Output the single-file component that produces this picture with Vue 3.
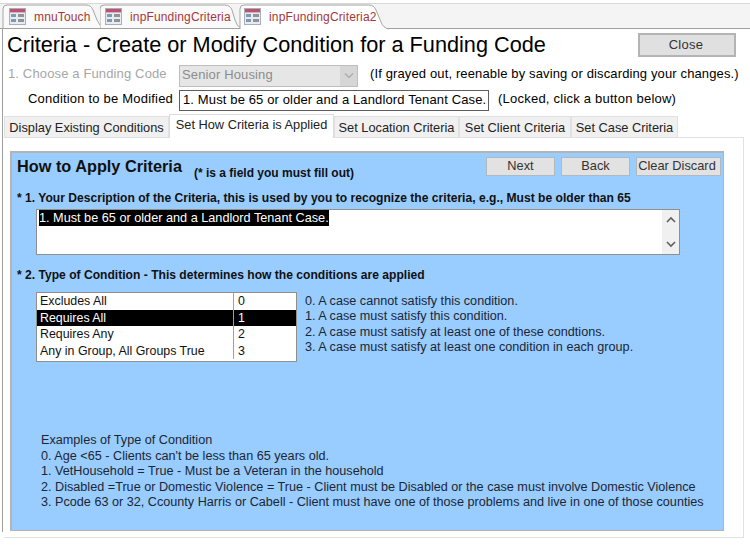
<script setup>
const docTabs = [
  { name: 'mnuTouch', w: 98, d: 'M1 28V9Q1 5 5 5H84Q89 5 91 10L95 20Q98 27 102 28', active: false },
  { name: 'inpFundingCriteria', w: 139, d: 'M0 28V9Q0 5 4 5H125Q130 5 132 10L135 20Q137 27 141 28', active: false },
  { name: 'inpFundingCriteria2', w: 150, d: 'M1 29V9Q1 5 5 5H130Q135 5 137 10L142 22Q144 28 150 29', active: true },
]
const pageTabs = [
  { name: 'Display Existing Conditions', w: 165 },
  { name: 'Set How Criteria is Applied', w: 165, active: true },
  { name: 'Set Location Criteria', w: 125 },
  { name: 'Set Client Criteria', w: 112 },
  { name: 'Set Case Criteria', w: 107 },
]
const rows = [
  { label: 'Excludes All', v: 0 },
  { label: 'Requires All', v: 1, selected: true },
  { label: 'Requires Any', v: 2 },
  { label: 'Any in Group, All Groups True', v: 3 },
]
const legend = [
  '0. A case cannot satisfy this condition.',
  '1. A case must satisfy this condition.',
  '2. A case must satisfy at least one of these condtions.',
  '3. A case must satisfy at least one condition in each group.',
]
const examples = [
  'Examples of Type of Condition',
  "0. Age <65 - Clients can't be less than 65 years old.",
  '1. VetHousehold = True - Must be a Veteran in the household',
  '2. Disabled =True or Domestic Violence = True - Client must be Disabled or the case must involve Domestic Violence',
  '3. Pcode 63 or 32, Ccounty Harris or Cabell - Client must have one of those problems and live in one of those counties',
]
</script>

<template>
  <div class="app">
    <div class="doc-strip">
      <div
        v-for="t in docTabs"
        :key="t.name"
        class="doc-tab"
        :class="{ active: t.active }"
        :style="{ width: t.w + 'px' }"
      >
        <svg class="tab-shape" :width="t.w + 4" height="30" :viewBox="`0 0 ${t.w + 4} 30`">
          <path :d="t.d" :fill="t.active ? '#fff' : '#fafafa'" stroke="#a6a6a6" />
        </svg>
        <svg class="form-icon" width="17" height="17" viewBox="0 0 17 17">
          <rect x="0.5" y="0.5" width="16" height="16" fill="#e8ecf0" stroke="#a9afb8" />
          <rect x="1" y="1" width="15" height="3.4" fill="#b9536f" />
          <rect x="2" y="6" width="5" height="3" fill="#7f99b3" />
          <rect x="2" y="11" width="5" height="3" fill="#7f99b3" />
          <rect x="9" y="6" width="6" height="3" fill="#8d939a" />
          <rect x="9" y="11" width="6" height="3" fill="#8d939a" />
        </svg>
        <span class="doc-name">{{ t.name }}</span>
      </div>
    </div>

    <div class="form">
      <div class="title-row">
        <h1>Criteria - Create or Modify Condition for a Funding Code</h1>
        <button class="btn close">Close</button>
      </div>

      <div class="field-row first">
        <span class="lbl disabled">1. Choose a Funding Code</span>
        <div class="combo">
          <span class="combo-text">Senior Housing</span>
          <span class="combo-btn">
            <svg width="12" height="8" viewBox="0 0 12 8"><path d="M2 1.5 6 5.5 10 1.5" fill="none" stroke="#a8a8a8" stroke-width="1.2" /></svg>
          </span>
        </div>
        <span class="note">(If grayed out, reenable by saving or discarding your changes.)</span>
      </div>

      <div class="field-row second">
        <span class="lbl cond">Condition to be Modified</span>
        <div class="locked">1. Must be 65 or older and a Landlord Tenant Case.</div>
        <span class="note n2">(Locked, click a button below)</span>
      </div>

      <div class="page-tabs">
        <div
          v-for="t in pageTabs"
          :key="t.name"
          class="page-tab"
          :class="{ active: t.active }"
          :style="{ width: t.w + 'px' }"
        >{{ t.name }}</div>
      </div>

      <div class="tab-page">
        <section class="panel">
          <header class="panel-head">
            <h2>How to Apply Criteria</h2>
            <span class="req">(* is a field you must fill out)</span>
            <div class="actions">
              <button class="btn small nav">Next</button>
              <button class="btn small nav">Back</button>
              <button class="btn small clear">Clear Discard</button>
            </div>
          </header>

          <p class="q q1">* 1. Your Description of the Criteria, this is used by you to recognize the criteria, e.g., Must be older than 65</p>
          <div class="memo">
            <div class="memo-text"><span class="sel">1. Must be 65 or older and a Landlord Tenant Case.</span></div>
            <div class="scroll">
              <svg width="12" height="8" viewBox="0 0 12 8"><path d="M2 6 6 2 10 6" fill="none" stroke="#606060" stroke-width="1.6" /></svg>
              <svg width="12" height="8" viewBox="0 0 12 8"><path d="M2 2 6 6 10 2" fill="none" stroke="#606060" stroke-width="1.6" /></svg>
            </div>
          </div>

          <p class="q q2">* 2. Type of Condition - This determines how the conditions are applied</p>
          <div class="cond-row">
            <div class="listbox">
              <div v-for="r in rows" :key="r.v" class="list-row" :class="{ selected: r.selected }">
                <span class="c1">{{ r.label }}</span>
                <span class="c2">{{ r.v }}</span>
              </div>
            </div>
            <div class="legend">
              <div v-for="l in legend" :key="l">{{ l }}</div>
            </div>
          </div>

          <div class="examples">
            <div v-for="e in examples" :key="e">{{ e }}</div>
          </div>
        </section>
      </div>
    </div>
  </div>
</template>

<style scoped>
.app {
  width: 750px;
  height: 546px;
  overflow: hidden;
  background: #fff;
  font-family: "Liberation Sans", Arial, sans-serif;
  color: #000;
  box-sizing: border-box;
  padding-top: 3px;
}
.doc-strip {
  height: 26px;
  box-sizing: border-box;
  display: flex;
  padding-left: 2px;
  background: #f4f4f4;
  border-top: 1px solid #d8d8d8;
  border-bottom: 1px solid #a0a0a0;
}
.doc-tab {
  position: relative;
  height: 24px;
  display: flex;
  align-items: center;
  padding-left: 5px;
  box-sizing: border-box;
  font-size: 12px;
  color: #a4373a;
}
.doc-tab:first-child { padding-left: 7px; }
.tab-shape {
  position: absolute;
  left: 0;
  top: -4px;
}
.doc-tab.active { z-index: 2; }
.form-icon { position: relative; flex: none; }
.doc-name {
  position: relative;
  margin-left: 8px;
  padding-top: 2px;
  letter-spacing: 0.15px;
}

.form {
  margin-left: 2px;
  border-left: 1px solid #a0a0a0;
  height: 503px;
  padding-left: 1px;
  box-sizing: border-box;
}
.title-row {
  display: flex;
  height: 35px;
  box-sizing: border-box;
  padding: 2px 0 0 3px;
}
h1 {
  margin: 0;
  font-size: 21.7px;
  line-height: 28px;
  font-weight: 400;
  white-space: nowrap;
  width: 631px;
}
.btn {
  font: inherit;
  color: #333;
  background: #e0e0e0;
  border: 2px solid #b4b4b4;
  box-sizing: border-box;
  padding: 0;
}
.close {
  width: 98px;
  height: 24px;
  font-size: 13px;
  margin-top: 2px;
  padding: 0 2px 2px 0;
  letter-spacing: 0.3px;
}
.field-row {
  display: flex;
  align-items: center;
  font-size: 13px;
  white-space: nowrap;
}
.first { height: 22px; margin-top: 1px; }
.second { height: 21px; margin-top: 3px; }
.lbl { display: block; width: 175px; box-sizing: border-box; }
.first .lbl, .first .note { margin-bottom: 5px; }
.second .lbl, .second .note { margin-bottom: 4px; }
.disabled { color: #a6a6a6; padding-left: 4px; letter-spacing: 0.14px; }
.cond { padding-left: 24px; letter-spacing: 0.2px; }
.combo {
  width: 179px;
  height: 22px;
  box-sizing: border-box;
  background: #e6e6e6;
  border: 1px solid #bdbdbd;
  color: #8c8c8c;
  display: flex;
  align-items: center;
  justify-content: space-between;
  padding-left: 2px;
  letter-spacing: 0.14px;
}
.combo-text { margin-bottom: 3px; }
.combo-btn {
  width: 17px;
  height: 20px;
  background: #d6d6d6;
  display: flex;
  align-items: center;
  justify-content: center;
}
.note { margin-left: 12px; letter-spacing: 0.13px; }
.n2 { margin-left: 9px; letter-spacing: 0.23px; }
.locked {
  width: 310px;
  height: 21px;
  line-height: 17px;
  box-sizing: border-box;
  border: 1px solid #5e5e5e;
  padding-left: 3px;
  letter-spacing: 0.13px;
}
.page-tabs {
  display: flex;
  align-items: flex-end;
  height: 23px;
  margin-top: 3px;
  font-size: 12.8px;
}
.page-tab {
  height: 21px;
  line-height: 21px;
  box-sizing: border-box;
  text-align: center;
  background: #f0f0f0;
  border: 1px solid #e1e1e1;
  border-bottom: 0;
  white-space: nowrap;
  color: #222;
}
.page-tab.active {
  height: 24px;
  line-height: 20px;
  background: #fff;
  border-color: #dcdcdc;
  margin-bottom: -1px;
  position: relative;
  z-index: 1;
}
.tab-page {
  width: 740px;
  height: 401px;
  box-sizing: border-box;
  border: 1px solid #e1e1e1;
  border-left: 0;
  padding: 13px 0 0 6px;
}
.panel {
  width: 714px;
  height: 380px;
  box-sizing: border-box;
  background: #99ccff;
  border: 2px solid #b4b4b4;
  border-width: 2px 1px 1px 2px;
  font-size: 12.65px;
  color: #1c2733;
  display: flex;
  flex-direction: column;
  padding-left: 5px;
}
.panel-head {
  display: flex;
  height: 30px;
  color: #111;
}
h2 {
  margin: 3px 0 0;
  font-size: 16.3px;
  line-height: 20px;
  font-weight: 700;
  white-space: nowrap;
  width: 177px;
}
.req {
  font-weight: 700;
  font-size: 12px;
  margin-top: 11px;
  line-height: 18px;
  width: 292px;
  white-space: nowrap;
}
.actions {
  display: flex;
  gap: 6px;
  margin-top: 4px;
  height: 19px;
}
.small {
  height: 19px;
  font-size: 12.8px;
  border-width: 1px;
  border-color: #b0b8c0;
  background: #e2e2e2;
  padding-bottom: 2px;
}
.nav { width: 69px; }
.clear { width: 85px; white-space: nowrap; padding-right: 3px; }
.q {
  margin: 0;
  font-size: 12.1px;
  font-weight: 700;
  line-height: 16px;
  white-space: nowrap;
  color: #111;
}
.q1 { margin-top: 7px; }
.memo {
  margin: 3px 0 0 19px;
  width: 644px;
  height: 46px;
  box-sizing: border-box;
  background: #fff;
  border: 1px solid #8f8f8f;
  display: flex;
  justify-content: space-between;
}
.memo-text { padding: 0 0 0 2px; line-height: 15px; }
.sel {
  background: #000;
  color: #fff;
  display: inline-block;
  font-size: 12.7px;
  line-height: 16px;
}
.scroll {
  width: 17px;
  background: #f0f0f0;
  display: flex;
  flex-direction: column;
  justify-content: space-between;
  align-items: center;
  padding: 6px 0;
  box-sizing: border-box;
}
.q2 { margin-top: 12px; }
.cond-row {
  display: flex;
  margin: 9px 0 0 19px;
}
.listbox {
  width: 261px;
  height: 70px;
  box-sizing: border-box;
  background: #fff;
  border: 1px solid #8f8f8f;
  color: #111;
  font-size: 12.4px;
}
.list-row {
  display: flex;
  height: 16.5px;
  line-height: 16.5px;
}
.list-row.selected { background: #000; color: #fff; }
.c1 {
  width: 197px;
  padding-left: 3px;
  box-sizing: border-box;
  border-right: 1px solid #a0a0a0;
  white-space: nowrap;
}
.c2 { padding-left: 4px; }
.legend {
  margin: 0 0 0 8px;
  padding-top: 2px;
  line-height: 15.3px;
  white-space: nowrap;
}
.examples {
  margin: 71px 0 0 24px;
  line-height: 15.5px;
  white-space: nowrap;
}
</style>

<style>
html, body { margin: 0; background: #fff; }
</style>
